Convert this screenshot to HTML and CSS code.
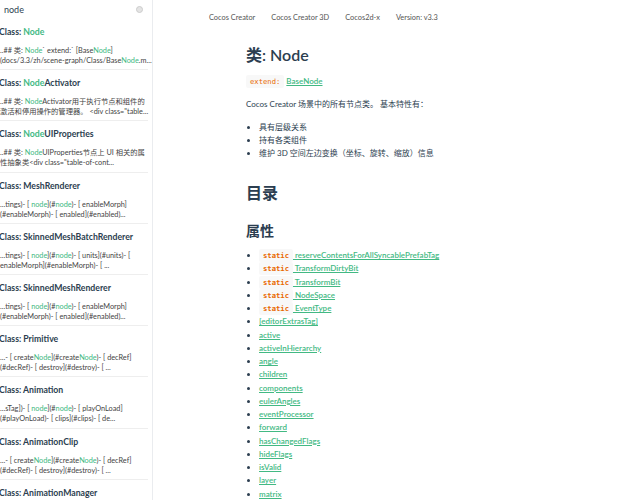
FILE: index.html
```html
<!DOCTYPE html>
<html lang="zh">
<head>
<meta charset="UTF-8">
<meta name="viewport" content="width=device-width, initial-scale=1.0">
<title>类: Node</title>
<link rel="stylesheet" href="styles.css">
</head>
<body>
  <div class="page">
    <aside class="sidebar">
      <div class="search">
        <span class="search-text">node</span>
        <span class="search-clear"></span>
      </div>
      <ul class="results">
        <li class="result">
          <div class="result-title">Class: <em>Node</em></div>
          <div class="result-text">..## 类: <em>Node</em>` extend:` [Base<em>Node</em>]<br>(docs/3.3/zh/scene-graph/Class/Base<em>Node</em>.m...</div>
        </li>
        <li class="result">
          <div class="result-title">Class: <em>Node</em>Activator</div>
          <div class="result-text">..## 类: <em>Node</em>Activator用于执行节点和组件的<br>激活和停用操作的管理器。 &lt;div class="table...</div>
        </li>
        <li class="result">
          <div class="result-title">Class: <em>Node</em>UIProperties</div>
          <div class="result-text">..## 类: <em>Node</em>UIProperties节点上 UI 相关的属<br>性抽象类&lt;div class="table-of-cont...</div>
        </li>
        <li class="result">
          <div class="result-title">Class: MeshRenderer</div>
          <div class="result-text">...tings)- [ <em>node</em>](#<em>node</em>)- [ enableMorph]<br>(#enableMorph)- [ enabled](#enabled)...</div>
        </li>
        <li class="result">
          <div class="result-title">Class: SkinnedMeshBatchRenderer</div>
          <div class="result-text">...tings)- [ <em>node</em>](#<em>node</em>)- [ units](#units)- [<br>enableMorph](#enableMorph)- [ ...</div>
        </li>
        <li class="result">
          <div class="result-title">Class: SkinnedMeshRenderer</div>
          <div class="result-text">...tings)- [ <em>node</em>](#<em>node</em>)- [ enableMorph]<br>(#enableMorph)- [ enabled](#enabled)...</div>
        </li>
        <li class="result">
          <div class="result-title">Class: Primitive</div>
          <div class="result-text">...- [ create<em>Node</em>](#create<em>Node</em>)- [ decRef]<br>(#decRef)- [ destroy](#destroy)- [ ...</div>
        </li>
        <li class="result">
          <div class="result-title">Class: Animation</div>
          <div class="result-text">...sTag])- [ <em>node</em>](#<em>node</em>)- [ playOnLoad]<br>(#playOnLoad)- [ clips](#clips)- [ de...</div>
        </li>
        <li class="result">
          <div class="result-title">Class: AnimationClip</div>
          <div class="result-text">...- [ create<em>Node</em>](#create<em>Node</em>)- [ decRef]<br>(#decRef)- [ destroy](#destroy)- [ ...</div>
        </li>
        <li class="result">
          <div class="result-title">Class: AnimationManager</div>
        </li>
      </ul>
    </aside>

    <main class="main">
      <nav class="nav">
        <a>Cocos Creator</a>
        <a>Cocos Creator 3D</a>
        <a>Cocos2d-x</a>
        <a>Version: v3.3</a>
      </nav>
      <div class="content">
        <h1>类: Node</h1>
        <p><code>extend:</code> <a class="link">BaseNode</a></p>
        <p>Cocos Creator 场景中的所有节点类。 基本特性有：</p>
        <ul class="plain">
          <li>具有层级关系</li>
          <li>持有各类组件</li>
          <li>维护 3D 空间左边变换（坐标、旋转、缩放）信息</li>
        </ul>
        <h2>目录</h2>
        <h3>属性</h3>
        <ul class="props">
          <li><code class="static">static</code><a class="link"> reserveContentsForAllSyncablePrefabTag</a></li>
          <li><code class="static">static</code><a class="link"> TransformDirtyBit</a></li>
          <li><code class="static">static</code><a class="link"> TransformBit</a></li>
          <li><code class="static">static</code><a class="link"> NodeSpace</a></li>
          <li><code class="static">static</code><a class="link"> EventType</a></li>
          <li><a class="link">[editorExtrasTag]</a></li>
          <li><a class="link">active</a></li>
          <li><a class="link">activeInHierarchy</a></li>
          <li><a class="link">angle</a></li>
          <li><a class="link">children</a></li>
          <li><a class="link">components</a></li>
          <li><a class="link">eulerAngles</a></li>
          <li><a class="link">eventProcessor</a></li>
          <li><a class="link">forward</a></li>
          <li><a class="link">hasChangedFlags</a></li>
          <li><a class="link">hideFlags</a></li>
          <li><a class="link">isValid</a></li>
          <li><a class="link">layer</a></li>
          <li><a class="link">matrix</a></li>
        </ul>
      </div>
    </main>
  </div>
</body>
</html>
```

FILE: styles.css
```css
html, body {
  margin: 0;
  padding: 0;
  height: 100%;
  overflow: hidden;
}
body {
  font-family: Lato, "Noto Sans CJK SC", sans-serif;
  color: #2c3e50;
  background-color: #fff;
}
.page {
  display: flex;
  height: 100%;
}
.sidebar {
  width: 152px;
  flex-shrink: 0;
  border-right: 1px solid #eaecef;
  overflow: hidden;
}
.search {
  display: flex;
  align-items: center;
  justify-content: space-between;
  height: 19px;
  padding: 0 9px 0 4px;
  font-size: 9px;
  color: #2c3e50;
}
.search-clear {
  width: 5px;
  height: 5px;
  border: 1px solid #ccc;
  border-radius: 50%;
  background-color: #e4e4e4;
}
.results {
  list-style: none;
  margin: 0;
  padding: 0;
}
.result {
  margin: 0 4px 0 -1px;
  padding: 7px 0 2px;
  height: 41.2px;
  border-bottom: 1px solid #eee;
  white-space: nowrap;
}
.result-title {
  font-size: 8.7px;
  font-weight: bold;
  color: #2c3e50;
  margin-bottom: 9px;
}
.result-text {
  font-size: 7.3px;
  line-height: 10px;
  color: #444;
  padding-left: 1px;
}
.result em {
  font-style: normal;
  color: #42b983;
}
.main {
  flex: 1;
  min-width: 0;
}
.nav {
  display: flex;
  gap: 16px;
  padding: 13px 0 0 56px;
  font-size: 7.4px;
  color: #555;
  height: 19px;
}
.content {
  padding-left: 93px;
  font-size: 8px;
  line-height: 13px;
}
h1 {
  font-size: 16px;
  font-weight: 600;
  margin: 13px 0 10px;
  line-height: 20px;
}
h2 {
  font-size: 16px;
  font-weight: 600;
  margin: 21px 0 0;
  line-height: 24px;
}
h3 {
  font-size: 14px;
  font-weight: 600;
  margin: 16px 0 8px;
  line-height: 20px;
}
p {
  margin: 0 0 10px;
}
code {
  font-family: "DejaVu Sans Mono", monospace;
  font-size: 7.2px;
  color: #e96900;
  background-color: #f8f8f8;
  padding: 2px 4px;
  border-radius: 2px;
}
.static {
  font-weight: bold;
}
.link {
  color: #42b983;
  font-weight: 600;
  text-decoration: underline;
}
ul.plain, ul.props {
  margin: 0;
  padding-left: 13px;
}
ul.plain li {
  line-height: 13px;
}
ul.props li {
  line-height: 13.25px;
}
```
